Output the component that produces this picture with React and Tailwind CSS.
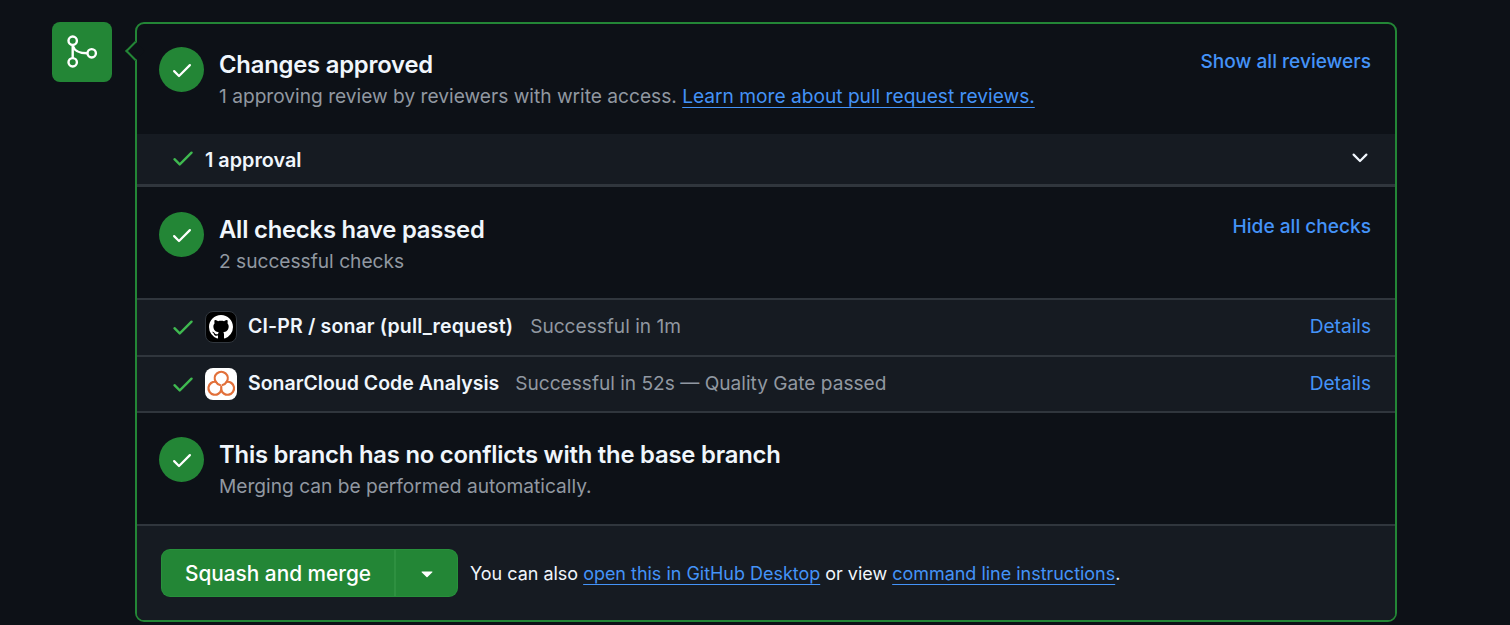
const CHECK = "M13.78 4.22a.75.75 0 0 1 0 1.06l-7.25 7.25a.75.75 0 0 1-1.06 0L2.22 9.28a.751.751 0 0 1 .018-1.042.751.751 0 0 1 1.042-.018L6 10.94l6.72-6.72a.75.75 0 0 1 1.06 0Z";
const MARK = "M8 0c4.42 0 8 3.58 8 8a8.013 8.013 0 0 1-5.45 7.59c-.4.08-.55-.17-.55-.38 0-.27.01-1.13.01-2.2 0-.75-.25-1.23-.54-1.48 1.78-.2 3.65-.88 3.65-3.95 0-.88-.31-1.59-.82-2.15.08-.2.36-1.02-.08-2.12 0 0-.67-.22-2.2.82-.64-.18-1.32-.27-2-.27-.68 0-1.36.09-2 .27-1.53-1.03-2.2-.82-2.2-.82-.44 1.1-.16 1.92-.08 2.12-.51.56-.82 1.28-.82 2.15 0 3.06 1.86 3.75 3.64 3.95-.23.2-.44.55-.51 1.07-.46.21-1.61.55-2.33-.66-.15-.24-.6-.83-1.23-.82-.67.01-.27.38.01.53.34.19.73.9.82 1.13.16.45.68 1.31 2.69.94 0 .67.01 1.3.01 1.49 0 .21-.15.45-.55.38A7.995 7.995 0 0 1 0 8c0-4.42 3.58-8 8-8Z";

function Octicon({ d, className }) {
  return (
    <svg viewBox="0 0 16 16" fill="currentColor" className={className}>
      <path d={d} />
    </svg>
  );
}

function Link({ children }) {
  return <a className="text-[#4493f8] underline underline-offset-[4px] decoration-1">{children}</a>;
}

function Section({ title, sub, action, height, pt }) {
  return (
    <div className={`flex items-start justify-between pl-[22px] pr-[24px] ${pt} ${height}`}>
      <div className="flex gap-[15px]">
        <div className="w-[45px] h-[45px] rounded-full bg-[#238636] flex items-center justify-center text-white shrink-0">
          <Octicon d={CHECK} className="w-[24px] h-[24px]" />
        </div>
        <div className="mt-[1px]">
          <div className="text-[23.8px] leading-[34px] font-semibold text-[#f0f6fc] tracking-[-0.2px]">{title}</div>
          <div className="text-[19.15px] leading-[28px] text-[#9198a1]">{sub}</div>
        </div>
      </div>
      {action && <a className="text-[19.1px] leading-[28px] font-medium text-[#4493f8]">{action}</a>}
    </div>
  );
}

function CheckRow({ icon, name, status, last, gap, nameClass }) {
  return (
    <div className={`flex items-center bg-[#161b22] border-t-2 border-[#30363d] pl-[33px] pr-[24px] ${last ? "border-b-2 h-[58px] pb-[1px]" : "h-[57px] pb-[2px]"}`}>
      <Octicon d={CHECK} className="w-[26px] h-[26px] text-[#3fb950] mr-[9px] shrink-0" />
      {icon}
      <span className={`ml-[11px] text-[19.5px] font-semibold text-[#f0f6fc] ${nameClass}`}>{name}</span>
      <span className={`${gap} text-[19.1px] text-[#9198a1]`}>{status}</span>
      <a className="ml-auto text-[19.1px] text-[#4493f8]">Details</a>
    </div>
  );
}

export default function App() {
  return (
    <div className="w-[1510px] h-[625px] overflow-hidden bg-[#0d1117] flex items-start pt-[22px] pl-[52px] font-['Inter','Liberation_Sans',sans-serif]">
      <div className="w-[60px] h-[60px] rounded-[8px] bg-[#238636] shrink-0 mr-[23px]">
        <svg viewBox="0 0 60 60" className="w-[60px] h-[60px]" fill="none" stroke="#ffffff" strokeWidth="2.4">
          <circle cx="20.7" cy="18.7" r="4.2" />
          <circle cx="20.7" cy="40.3" r="4.2" />
          <circle cx="39.7" cy="31.3" r="4.2" />
          <path d="M20.7 23V36" />
          <path d="M20.9 24Q23 31.3 35.5 31.3" />
        </svg>
      </div>
      <div className="relative w-[1262px] h-[600px] border-2 border-[#238636] rounded-[9px]">
        <div className="absolute -left-[9px] top-[20px] w-[14px] h-[14px] rotate-45 bg-[#0d1117] border-l-2 border-b-2 border-[#238636]"></div>
        <div className="relative h-full rounded-[7px] overflow-hidden flex flex-col">
          <Section
            height="h-[110px]"
            pt="pt-[23px]"
            title="Changes approved"
            sub={<>1 approving review by reviewers with write access. <Link>Learn more about pull request reviews.</Link></>}
            action="Show all reviewers"
          />
          <div className="flex items-center h-[53px] bg-[#161b22] border-b-[3px] border-[#30363d] pl-[33px] pr-[23px]">
            <Octicon d={CHECK} className="w-[26px] h-[26px] text-[#3fb950] mr-[9px] mb-[2px]" />
            <span className="text-[19.8px] font-semibold text-[#f0f6fc] mt-[4px]">1 approval</span>
            <svg viewBox="0 0 16 16" className="ml-auto w-[24px] h-[24px] text-[#f0f6fc] mb-[2px]" fill="currentColor">
              <path d="M12.78 5.22a.749.749 0 0 1 0 1.06l-4.25 4.25a.749.749 0 0 1-1.06 0L3.22 6.28a.749.749 0 1 1 1.06-1.06L8 8.939l3.72-3.719a.749.749 0 0 1 1.06 0Z" />
            </svg>
          </div>
          <Section height="h-[111px]" pt="pt-[25px]" title="All checks have passed" sub="2 successful checks" action="Hide all checks" />
          <CheckRow
            gap="ml-[17px]"
            nameClass="tracking-[0.15px]"
            name="CI-PR / sonar (pull_request)"
            status="Successful in 1m"
            icon={
              <div className="w-[32px] h-[32px] rounded-[8px] bg-black border border-[#30363d] flex items-center justify-center text-white shrink-0">
                <Octicon d={MARK} className="w-[24px] h-[24px]" />
              </div>
            }
          />
          <CheckRow
            last
            gap="ml-[16px]"
            nameClass=""
            name="SonarCloud Code Analysis"
            status="Successful in 52s — Quality Gate passed"
            icon={
              <div className="w-[32px] h-[32px] rounded-[8px] bg-white shrink-0">
                <svg viewBox="0 0 32 32" className="w-[32px] h-[32px]" fill="none" stroke="#e2703a" strokeWidth="2.2" strokeLinecap="round">
                  <path d="M10.8 13.8A6.5 6.5 0 1 1 21.7 13.8A6.5 6.5 0 1 1 16.25 21.8A6.5 6.5 0 1 1 10.8 13.8Z" />
                  <path d="M10.8 13.8A6.5 6.5 0 0 0 15 17" />
                  <path d="M21.7 13.8A6.5 6.5 0 0 1 17.5 17" />
                  <path d="M16.25 21.8V18.8" />
                </svg>
              </div>
            }
          />
          <Section height="h-[111px]" pt="pt-[24px]" title="This branch has no conflicts with the base branch" sub="Merging can be performed automatically." />
          <div className="flex-1 flex items-center bg-[#161b22] border-t-2 border-[#30363d] pl-[24px]">
            <div className="flex h-[48px] rounded-[9px] bg-[#238636] text-white border border-[#2ea043]/40">
              <div className="w-[234px] flex items-center justify-center text-[20.8px] font-medium border-r-2 border-[#3a9a4a]/50 pt-[1px]">Squash and merge</div>
              <div className="w-[61px] flex items-center justify-center">
                <svg viewBox="0 0 16 16" className="w-[24px] h-[24px]" fill="currentColor">
                  <path d="m4.427 7.427 3.396 3.396a.25.25 0 0 0 .354 0l3.396-3.396A.25.25 0 0 0 11.396 7H4.604a.25.25 0 0 0-.177.427Z" />
                </svg>
              </div>
            </div>
            <div className="ml-[12px] mt-[2px] text-[17.97px] text-[#f0f6fc]">
              You can also <Link>open this in GitHub Desktop</Link> or view <Link>command line instructions</Link>.
            </div>
          </div>
        </div>
      </div>
    </div>
  );
}
